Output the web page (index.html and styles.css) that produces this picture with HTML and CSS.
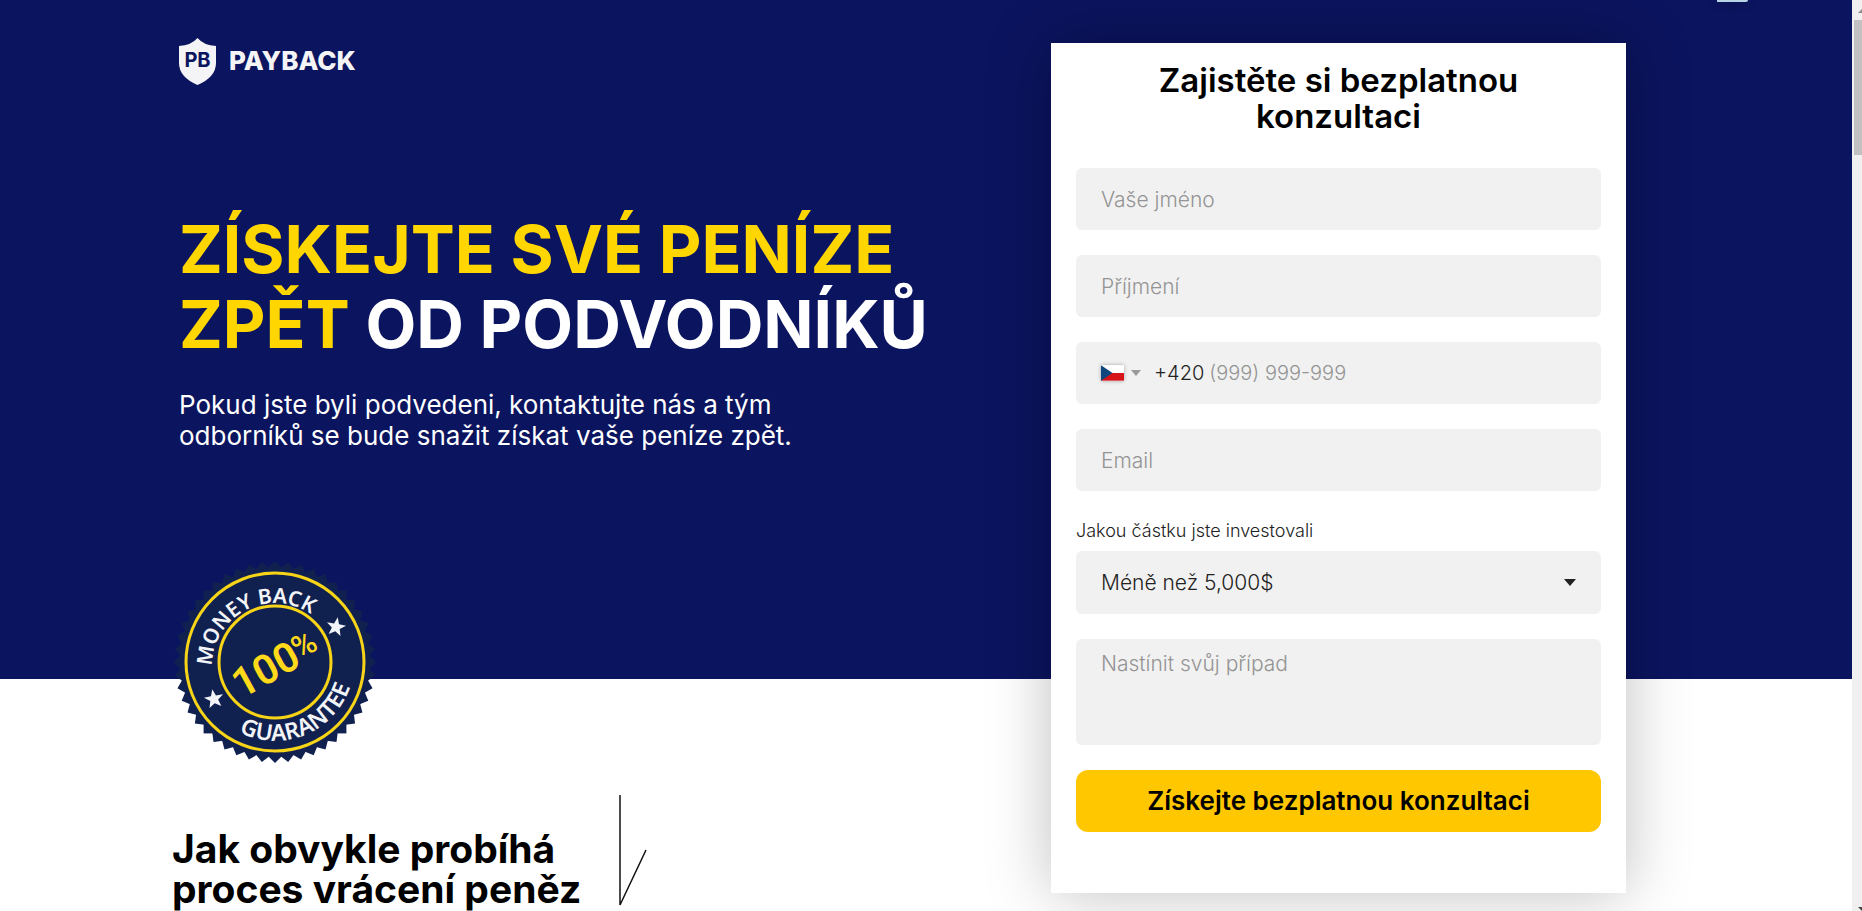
FILE: index.html
```html
<!DOCTYPE html>
<html lang="cs">
<head>
<meta charset="utf-8">
<meta name="viewport" content="width=device-width, initial-scale=1">
<title>PAYBACK</title>
<link rel="stylesheet" href="styles.css">
</head>
<body>
<div class="page">
  <button class="widget" type="button" aria-label="Chat"></button>
  <header class="hero">
    <div class="intro">
      <a class="logo" href="#">
        <svg class="logo-mark" viewBox="0 0 37 47" aria-hidden="true">
          <path fill="#f4f4f6" d="M18.500 0Q25 7.500 37 8V25Q37 39 18.500 47Q0 39 0 25V8Q12 7.500 18.500 0Z"/>
          <text class="logo-initials" x="18.500" y="29" text-anchor="middle">PB</text>
        </svg>
        <span class="logo-name">PAYBACK</span>
      </a>
      <h1 class="headline"><em class="accent">ZÍSKEJTE SVÉ PENÍZE<br>ZPĚT</em> OD PODVODNÍKŮ</h1>
      <p class="lead">Pokud jste byli podvedeni, kontaktujte nás a tým<br>odborníků se bude snažit získat vaše peníze zpět.</p>
      <svg class="seal" viewBox="-100 -100 200 200" role="img" aria-label="Money back guarantee 100%">
        <defs>
          <path id="arc-top" d="M-63 4A63 63 0 1 1 63 4"/>
          <path id="arc-bottom" d="M-36 70A79 79 0 0 0 79 -6"/>
          <path id="star" d="M0 -10L2.500 -3.200L9.700 -3L4 1.300L6 8.200L0 4.200L-6 8.200L-4 1.300L-9.700 -3L-2.500 -3.200Z"/>
          <rect id="teeth" x="-71.400" y="-71.400" width="142.800" height="142.800"/>
        </defs>
        <g class="seal-body">
          <use href="#teeth"/>
          <use href="#teeth" transform="rotate(7.500)"/>
          <use href="#teeth" transform="rotate(15)"/>
          <use href="#teeth" transform="rotate(22.500)"/>
          <use href="#teeth" transform="rotate(30)"/>
          <use href="#teeth" transform="rotate(37.500)"/>
          <use href="#teeth" transform="rotate(45)"/>
          <use href="#teeth" transform="rotate(52.500)"/>
          <use href="#teeth" transform="rotate(60)"/>
          <use href="#teeth" transform="rotate(67.500)"/>
          <use href="#teeth" transform="rotate(75)"/>
          <use href="#teeth" transform="rotate(82.500)"/>
        </g>
        <circle class="seal-ring" r="89"/>
        <circle class="seal-ring" r="56"/>
        <text class="seal-text"><textPath href="#arc-top">MONEY BACK</textPath></text>
        <text class="seal-text seal-text-bottom"><textPath href="#arc-bottom">GUARANTEE</textPath></text>
        <use href="#star" class="seal-star" transform="translate(61 -35) rotate(10)"/>
        <use href="#star" class="seal-star" transform="translate(-61 37) rotate(-10)"/>
        <g transform="rotate(-29)">
          <text class="seal-number" x="-47" y="16">100</text>
          <text class="seal-percent" x="22" y="10">%</text>
        </g>
      </svg>
    </div>
    <form class="card">
      <h2 class="card-title">Zajistěte si bezplatnou<br>konzultaci</h2>
      <input class="field" type="text" aria-label="Vaše jméno" placeholder="Vaše jméno">
      <input class="field" type="text" aria-label="Příjmení" placeholder="Příjmení">
      <div class="field phone">
        <button class="country" type="button" aria-label="Česko">
          <svg class="flag" viewBox="0 0 24 16" aria-hidden="true">
            <path fill="#fff" d="M0 0H24V8H0Z"/><path fill="#d7141a" d="M0 8H24V16H0Z"/><path fill="#11457e" d="M0 0L12 8L0 16Z"/>
          </svg>
          <svg class="caret" viewBox="0 0 10 6" aria-hidden="true"><path fill="#999" d="M0 0H10L5 6Z"/></svg>
        </button>
        <label class="prefix" for="phone">+420</label>
        <input class="phone-input" id="phone" type="tel" placeholder="(999) 999-999">
      </div>
      <input class="field" type="email" aria-label="Email" placeholder="Email">
      <div class="amount">
        <label class="amount-label" for="amount">Jakou částku jste investovali</label>
        <div class="select-wrap">
          <select class="field select" id="amount"><option>Méně než 5,000$</option></select>
          <svg class="select-arrow" viewBox="0 0 12 7" aria-hidden="true"><path fill="#222" d="M0 0H12L6 7Z"/></svg>
        </div>
      </div>
      <textarea class="field message" aria-label="Nastínit svůj případ" placeholder="Nastínit svůj případ"></textarea>
      <button class="submit" type="submit">Získejte bezplatnou konzultaci</button>
    </form>
  </header>
  <section class="process">
    <h2 class="process-title">Jak obvykle probíhá<br>proces vrácení peněz</h2>
    <svg class="process-arrow" viewBox="0 0 28 112" aria-hidden="true"><path d="M1 0V110L27 55"/></svg>
  </section>
</div>
<div class="scrollbar" aria-hidden="true">
  <svg class="scroll-up" viewBox="0 0 4 4"><path fill="#8a8a8a" d="M4 0V4H0Z"/></svg>
  <div class="thumb"></div>
  <svg class="scroll-down" viewBox="0 0 4 4"><path fill="#444" d="M0 0H4V4Z"/></svg>
</div>
</body>
</html>
```

FILE: styles.css
```css
* { box-sizing: border-box; }

body {
  margin: 0;
  display: flex;
  height: 100vh;
  overflow: hidden;
  background: #fff;
  color: #000;
  font-family: Inter, "Open Sans", sans-serif;
}

.page { position: relative; flex: 1; min-width: 0; overflow: hidden; }

.hero {
  display: grid;
  grid-template-columns: minmax(0, 1fr) 575px;
  align-items: start;
  height: 679px;
  padding: 0 226px 0 179px;
  background: #0b145e;
  color: #fff;
}

.widget {
  position: absolute;
  top: 0;
  right: 104px;
  width: 31px;
  height: 2px;
  padding: 0;
  border: 0;
  border-radius: 0 0 8px 0;
  background: #b9d3e6;
  box-shadow: 0 2px 8px rgba(0, 0, 0, .4);
}

.intro { display: flex; flex-direction: column; align-items: flex-start; padding-top: 38px; }

.logo { display: flex; align-items: center; gap: 13px; color: #f4f4f6; text-decoration: none; }
.logo-mark { width: 37px; height: 47px; }
.logo-initials { font-size: 20px; font-weight: 700; fill: #0b145e; }
.logo-name { padding-bottom: 2px; font-size: 26px; line-height: 30px; font-weight: 800; }

.headline { margin: 127px 0 0; font-size: 66px; line-height: 75px; font-weight: 700; white-space: nowrap; }
.accent { color: #ffd600; font-style: normal; }

.lead { margin: 27px 0 0; font-size: 26px; line-height: 31px; white-space: nowrap; }

.seal { width: 200px; height: 200px; margin: 111px 0 0 -4px; overflow: visible; }
.seal-body { fill: #10204f; }
.seal-ring { fill: none; stroke: #f7d417; stroke-width: 3; }
.seal-text { font-family: "Noto Sans", sans-serif; font-size: 21px; font-weight: 600; fill: #f2f4f8; }
.seal-text-bottom { font-size: 23px; }
.seal-star { fill: #f2f4f8; }
.seal-number { font-family: Roboto, sans-serif; font-size: 41px; font-weight: 600; fill: #ffd91a; }
.seal-percent { font-family: Roboto, sans-serif; font-size: 32px; font-weight: 500; fill: #ffd91a; }

.card {
  position: relative;
  display: flex;
  flex-direction: column;
  gap: 25px;
  margin-top: 43px;
  padding: 19px 25px 61px;
  background: #fff;
  color: #000;
  box-shadow: 0 0 60px rgba(0, 0, 0, .25);
}
.card-title { margin: 0 0 9px; font-size: 33px; line-height: 36px; font-weight: 600; text-align: center; }

.field {
  display: block;
  width: 100%;
  height: 62px;
  padding: 0 25px;
  border: 0;
  border-radius: 6px;
  background: #f1f1f1;
  color: #222;
  font: 300 21px/24px Inter, "Open Sans", sans-serif;
}
.field::placeholder, .phone-input::placeholder { color: #949494; opacity: 1; }

.phone { display: flex; align-items: center; font-size: 20px; }
.country { display: flex; align-items: center; gap: 7px; padding: 0; border: 0; background: none; }
.flag { width: 23px; height: 16px; box-shadow: 0 0 4px rgba(0, 0, 0, .3); }
.caret { width: 10px; height: 6px; }
.prefix { margin: 0 5px 0 13px; }
.phone-input { flex: 1; min-width: 0; padding: 0; border: 0; background: none; color: #222; font: inherit; }

.amount { display: flex; flex-direction: column; gap: 8px; padding-top: 3px; }
.amount-label { font-size: 18px; line-height: 24px; font-weight: 300; color: #222; }
.select-wrap { position: relative; }
.select { height: 63px; appearance: none; }
.select-arrow { position: absolute; top: 28px; right: 25px; width: 12px; height: 7px; pointer-events: none; }

.message { height: 106px; padding-top: 13px; resize: none; }

.submit {
  height: 62px;
  border: 0;
  border-radius: 12px;
  background: #ffc700;
  color: #000;
  font: 600 26px/30px Inter, "Open Sans", sans-serif;
}

.process { display: flex; align-items: flex-start; gap: 38px; padding: 116px 0 0 172px; }
.process-title { margin: 34px 0 0; font-size: 39px; line-height: 40px; font-weight: 700; white-space: nowrap; }
.process-arrow { width: 28px; height: 112px; fill: none; stroke: #111; stroke-width: 1.500; }

.scrollbar { display: flex; flex-direction: column; align-items: flex-end; width: 10px; background: #f0f0f0; }
.scroll-up { width: 4px; height: 4px; margin-top: 9px; }
.thumb { width: 8px; height: 135px; margin-top: 7px; background: #c1c1c1; }
.scroll-down { width: 4px; height: 4px; margin-top: auto; }
```
